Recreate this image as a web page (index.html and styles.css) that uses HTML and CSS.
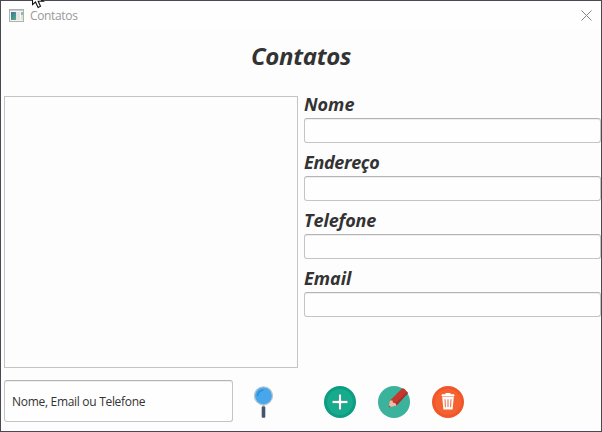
FILE: index.html
```html
<!DOCTYPE html>
<html lang="pt-BR">
<head>
<meta charset="utf-8">
<title>Contatos</title>
<link rel="stylesheet" href="styles.css">
</head>
<body>
<div class="window">
  <header class="titlebar">
    <svg class="app-icon" width="15" height="13" viewBox="0 0 15 13">
      <defs><linearGradient id="pane" x2="1" y2="1"><stop stop-color="#3a70a0"/><stop offset="1" stop-color="#5aad80"/></linearGradient></defs>
      <rect x=".5" y=".5" width="14" height="12" fill="#f5f5f5" stroke="#aeb1b3"/>
      <path d="M1 1.5h13" stroke="#c8cacc"/>
      <rect x="2" y="3" width="5" height="8" fill="url(#pane)"/>
      <rect x="7" y="3" width="4" height="8" fill="#e4e6e6"/>
      <rect x="12" y="3" width="2" height="3" fill="#8fbcae"/>
      <rect x="12" y="6" width="2" height="5" fill="#d5e9d0"/>
    </svg>
    <span class="caption">Contatos</span>
    <svg class="close" width="11" height="11" viewBox="0 0 11 11"><path d="M.5.5l10 10M10.5.5l-10 10" stroke="#858585" fill="none"/></svg>
  </header>
  <h1 class="heading">Contatos</h1>
  <main class="content">
    <div class="list"></div>
    <form class="form">
      <label class="field"><span class="label nome">Nome</span><input class="input" type="text"></label>
      <label class="field"><span class="label endereco">Endereço</span><input class="input" type="text"></label>
      <label class="field"><span class="label telefone">Telefone</span><input class="input" type="text"></label>
      <label class="field"><span class="label email">Email</span><input class="input" type="text"></label>
    </form>
  </main>
  <footer class="toolbar">
    <div class="search"><span class="search-text">Nome, Email ou Telefone</span></div>
    <svg class="magnifier" width="20" height="32" viewBox="0 0 20 32">
      <path d="M9.5 18v4" stroke="#a9b3bd" stroke-width="2"/>
      <circle cx="9.5" cy="9.8" r="9" fill="#48a6eb" stroke="#b6c6d2" stroke-width="1.2"/>
      <path d="M3.6 10A6 6 0 0 1 9.5 4.1" fill="none" stroke="#278bd1" stroke-width="1.3"/>
      <rect x="7.7" y="20.5" width="3.6" height="11.3" rx="1" fill="#48546b"/>
    </svg>
    <div class="actions">
      <svg width="32" height="32" viewBox="0 0 32 32">
        <circle cx="16" cy="16" r="16" fill="#0e9c83"/>
        <circle cx="16" cy="16" r="13" fill="#16ab8d"/>
        <path d="M16 8.5v15M8.5 16h15" stroke="#08806b" stroke-width="3.6"/>
        <path d="M16 8.5v15M8.5 16h15" stroke="#fff" stroke-width="2.4"/>
      </svg>
      <svg width="32" height="32" viewBox="0 0 32 32">
        <circle cx="16" cy="16" r="16" fill="#3bb39c"/>
        <path d="M12 14.5L24 2.5q1.2-.8 3 1t2.8 3.4L18.5 19.5z" fill="#c4392f"/>
        <path d="M16.8 18L29.2 5.8l.6 1.6-11.3 12.1z" fill="#a5302b"/>
        <path d="M12 14.5L10.6 21.5l7.9-2-1-2.3-2.4-.4-.7-2.2z" fill="#efbc9f"/>
        <path d="M11 19.4l-.4 2.1 2.2-.5z" fill="#873b34"/>
      </svg>
      <svg width="32" height="32" viewBox="0 0 32 32">
        <circle cx="16" cy="16" r="16" fill="#ef572b"/>
        <circle cx="16" cy="16" r="13" fill="#f46232"/>
        <path d="M10.2 11h11.6l-1.2 12.5h-9.2z" fill="#fff"/>
        <path d="M10 10V8.8h3.8V7.5h4.4v1.3H22V10z" fill="#fff" stroke="#fff"/>
        <path d="M13 13.2l.5 8M16 13.2v8M19 13.2l-.5 8" stroke="#ec7652" stroke-width="1.1"/>
      </svg>
    </div>
  </footer>
</div>
<svg class="cursor" width="14" height="9" viewBox="0 0 14 9"><path d="M.5-6V4.6L3.5 2l2.6 5.4 2.4-1.2L6.2 1.2h5z" fill="#fff" stroke="#111" stroke-width="1.1"/></svg>
</body>
</html>
```
FILE: styles.css
```css
* { box-sizing: border-box; }
body { margin: 0; font-family: "Open Sans", "Noto Sans", sans-serif; color: #333; }
.window { width: 602px; height: 432px; border: 1px solid #4b4853; background: #fdfdfd; display: flex; flex-direction: column; overflow: hidden; }
.titlebar { height: 29px; flex: none; display: flex; align-items: center; padding: 0 9px 0 8px; background: #fefefe; }
.app-icon { margin-right: 6px; }
.caption { font-size: 12px; line-height: 16px; letter-spacing: -0.35px; color: #999; }
.close { margin-left: auto; }
.heading { height: 66px; flex: none; margin: 0; padding-top: 9px; text-align: center; font-size: 24px; line-height: 33px; font-weight: 700; font-style: italic; letter-spacing: -0.3px; }
.content { display: flex; gap: 6px; padding-left: 3px; height: 272px; flex: none; }
.list { width: 294px; flex: none; border: 1px solid #c4c4c4; }
.form { flex: 1; margin: 0; display: flex; flex-direction: column; gap: 9px; margin-top: -3px; }
.field { display: block; height: 49px; }
.label { display: block; height: 25px; line-height: 22px; font-size: 18px; font-weight: 700; font-style: italic; }
.nome { letter-spacing: 0; }
.endereco { letter-spacing: -0.35px; }
.telefone { letter-spacing: -0.1px; }
.email { letter-spacing: 0; }
.input { display: block; width: 100%; height: 25px; border: 1px solid #c4c4c4; border-top-color: #b4b4b4; border-radius: 3px; background: #fefefe; box-shadow: inset 0 1px 0 #eee; outline: 0; }
.toolbar { display: flex; align-items: center; padding-left: 3px; margin-top: 12px; height: 42px; flex: none; }
.search { width: 229px; height: 42px; display: flex; align-items: center; padding-left: 7px; border: 1px solid #c4c4c4; border-top-color: #b4b4b4; border-radius: 3px; background: #fefefe; box-shadow: inset 0 1px 0 #eee; }
.search-text { font-size: 12px; letter-spacing: -0.3px; white-space: nowrap; }
.magnifier { margin: 2px 0 0 21px; }
.actions { display: flex; gap: 22px; margin: 2px 0 0 50px; }
.cursor { position: absolute; left: 32px; top: 0; }
```
